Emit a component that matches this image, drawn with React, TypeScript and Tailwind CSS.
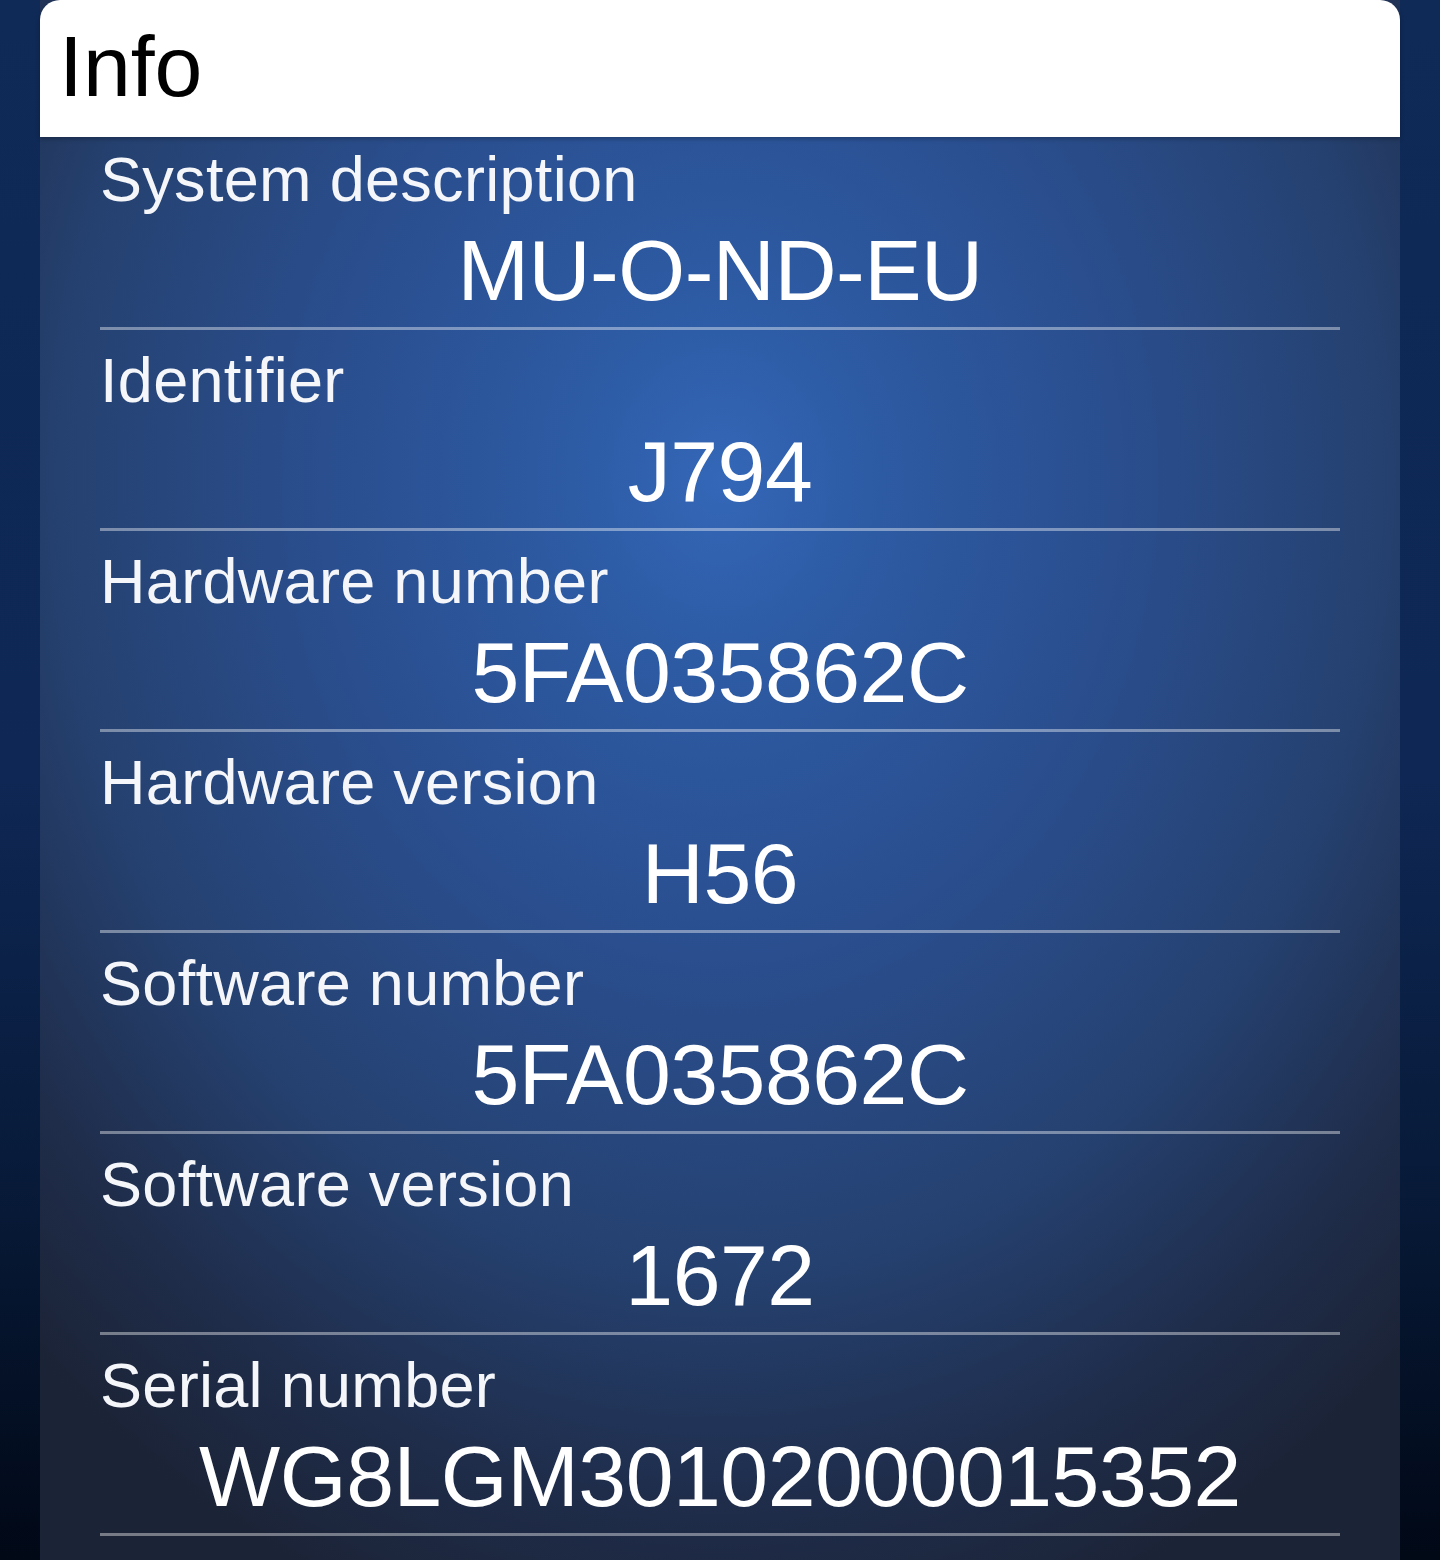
import React from 'react'

type Entry = {
    label: string
    value: string
}

const entries: Entry[] = [
    { label: 'System description', value: 'MU-O-ND-EU' },
    { label: 'Identifier', value: 'J794' },
    { label: 'Hardware number', value: '5FA035862C' },
    { label: 'Hardware version', value: 'H56' },
    { label: 'Software number', value: '5FA035862C' },
    { label: 'Software version', value: '1672' },
    { label: 'Serial number', value: 'WG8LGM30102000015352' },
]

const InfoRow = ({ entry, first }: { entry: Entry; first: boolean }) => {
    return (
        <div
            className={`flex flex-col border-b-[3px] border-white/40 pb-[14px] ${
                first ? 'pt-[11px]' : 'pt-[19px]'
            }`}
        >
            <div className="text-[63px] leading-none tracking-[0.3px] text-[#f4f6fa]">
                {entry.label}
            </div>
            <div className="mt-[16px] text-center text-[86px] leading-none tracking-[-0.5px] text-white">
                {entry.value}
            </div>
        </div>
    )
}

export default function App() {
    return (
        <div className="min-h-[1560px] w-full bg-[linear-gradient(to_bottom,#0f2a57_0%,#0e2754_50%,#071936_78%,#010816_100%)] px-[40px] font-['Liberation_Sans',Arial,sans-serif]">
            <div className="flex min-h-[1560px] flex-col bg-[radial-gradient(ellipse_1000px_1200px_at_680px_480px,#3467b8_0%,#2d5ba4_15%,#2a4e8e_40%,#254170_66%,#1f2d4b_85%,#1b2336_100%)]">
                {/* header bar */}
                <div className="relative z-10 flex h-[137px] items-center rounded-t-[20px] bg-white pb-[5px] pl-[19px] shadow-[0_2px_4px_rgba(0,0,0,0.25)]">
                    <span className="text-[86px] leading-none text-black">
                        Info
                    </span>
                </div>
                <div className="flex flex-col px-[60px]">
                    {entries.map((entry, i) => (
                        <InfoRow
                            key={entry.label}
                            entry={entry}
                            first={i === 0}
                        />
                    ))}
                </div>
            </div>
        </div>
    )
}
